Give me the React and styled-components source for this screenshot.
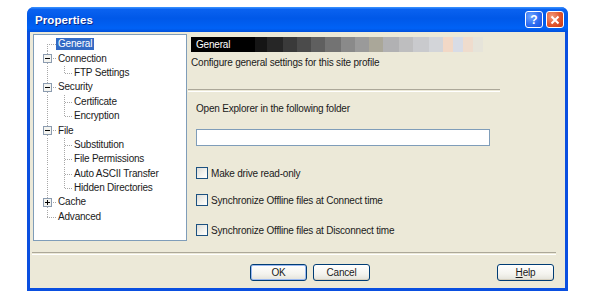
import React from 'react';
import styled, { createGlobalStyle } from 'styled-components';

const GlobalStyle = createGlobalStyle`
  html, body { margin: 0; padding: 0; background: #ffffff; }
  body { font-family: "Liberation Sans", Arial, sans-serif; }
`;

const Page = styled.div`
  padding: 7px 0 0 27px;
`;

const Window = styled.div`
  width: 541px;
  height: 284px;
  display: flex;
  flex-direction: column;
  background: #0a4fe0;
  border-radius: 7px 7px 0 0;
  box-sizing: border-box;
`;

const TitleBar = styled.div`
  height: 25px;
  flex: none;
  display: flex;
  align-items: center;
  padding: 0 4px 0 8px;
  border-radius: 7px 7px 0 0;
  background: linear-gradient(to bottom, #3d95ff 0%, #0a62f0 10%, #0058e8 45%, #0062f6 85%, #0050dc 100%);
`;

const TitleText = styled.div`
  flex: 1;
  color: #ffffff;
  font-weight: bold;
  font-size: 11.5px;
  text-shadow: 1px 1px 0 #0a2a8a;
  letter-spacing: 0.1px;
`;

const CaptionButton = styled.div`
  width: 18px;
  height: 17px;
  margin-left: 3px;
  box-sizing: border-box;
  border: 1px solid #ffffff;
  border-radius: 3px;
  display: flex;
  align-items: center;
  justify-content: center;
  color: #ffffff;
  font-weight: bold;
  font-size: 12px;
  background: ${p => (p.$close
    ? 'radial-gradient(circle at 30% 30%, #f29a7a 0%, #e0552e 55%, #c53a14 100%)'
    : 'radial-gradient(circle at 30% 30%, #6fa6ff 0%, #2d6cf2 55%, #1a4fd8 100%)')};
`;

const Client = styled.div`
  flex: 1;
  margin: 0 3px 3px 3px;
  background: #ece9d8;
  display: flex;
  flex-direction: column;
  font-size: 10px;
  letter-spacing: -0.2px;
  color: #1a1a1a;
`;

const MainRow = styled.div`
  display: flex;
  padding: 2px 0 0 3px;
`;

const Tree = styled.div`
  width: 154px;
  height: 207px;
  box-sizing: border-box;
  background: #ffffff;
  border: 1px solid #7f9db9;
  padding: 2px 0 0 4px;
`;

const TreeRow = styled.div`
  display: flex;
  align-items: center;
  height: 14.4px;
`;

const Label = styled.span`
  padding: 0 2px;
  line-height: 12px;
  height: 12px;
  white-space: nowrap;
  background: ${p => (p.$selected ? '#316ac5' : 'transparent')};
  color: ${p => (p.$selected ? '#ffffff' : '#1a1a1a')};
`;

const Panel = styled.div`
  flex: 1;
  padding: 3px 65px 0 4px;
  display: flex;
  flex-direction: column;
`;

const Header = styled.div`
  height: 15px;
  line-height: 15px;
  padding-left: 5px;
  color: #ffffff;
  background: linear-gradient(to right,
    #000000 0 64px, #151515 64px 76px, #262626 76px 92px, #3a3a3a 92px 106px,
    #4b4b4b 106px 120px, #5f5f5f 120px 134px, #737373 134px 150px, #8a8a8a 150px 164px,
    #9a9a9a 164px 178px, #aaa799 178px 192px, #b1b1b3 192px 208px, #bebebf 208px 222px,
    #c9cacd 222px 238px, #d3d5d9 238px 252px, #f2d8c6 252px 262px, #d8dce6 262px 272px,
    #efdccd 272px 282px, #e6e4da 282px 292px, transparent 292px);
`;

const Description = styled.div`
  margin-top: 4px;
  line-height: 14px;
`;

const Separator = styled.div`
  height: 1px;
  border-top: 1px solid #aca899;
  border-bottom: 1px solid #ffffff;
  margin: ${p => p.$margin};
`;

const Fields = styled.div`
  margin-left: 5px;
  display: flex;
  flex-direction: column;
`;

const FieldLabel = styled.div`
  margin-top: 10px;
  line-height: 14px;
`;

const TextInput = styled.div`
  margin-top: 13px;
  width: 294px;
  height: 17px;
  box-sizing: border-box;
  border: 1px solid #7f9db9;
  background: #ffffff;
`;

const CheckRow = styled.div`
  display: flex;
  align-items: center;
  gap: 3px;
  height: 14px;
  margin-top: ${p => p.$top}px;
`;

const CheckBox = styled.span`
  width: 12px;
  height: 12px;
  box-sizing: border-box;
  border: 1px solid #1c5180;
  background: linear-gradient(135deg, #dcdcd7 0%, #f4f4f0 60%, #ffffff 100%);
`;

const ButtonRow = styled.div`
  display: flex;
  margin-top: 9px;
  padding-left: 220px;
`;

const Button = styled.div`
  width: 57px;
  height: 17px;
  box-sizing: border-box;
  margin-left: ${p => p.$left || 0}px;
  border: 1px solid #003c74;
  border-radius: 3px;
  display: flex;
  align-items: center;
  justify-content: center;
  background: linear-gradient(to bottom, #ffffff 0%, #f4f3ee 60%, #e3e2da 100%);
  box-shadow: ${p => (p.$default ? 'inset 0 0 0 1px #9ab8f0' : 'inset 0 -1px 0 #d6d0c0')};
`;

const TREE = [
  { label: 'General', lines: ['first'], selected: true },
  { label: 'Connection', lines: ['tee'], box: '-' },
  { label: 'FTP Settings', lines: ['bar', 'ell'] },
  { label: 'Security', lines: ['tee'], box: '-' },
  { label: 'Certificate', lines: ['bar', 'tee'] },
  { label: 'Encryption', lines: ['bar', 'ell'] },
  { label: 'File', lines: ['tee'], box: '-' },
  { label: 'Substitution', lines: ['bar', 'tee'] },
  { label: 'File Permissions', lines: ['bar', 'tee'] },
  { label: 'Auto ASCII Transfer', lines: ['bar', 'tee'] },
  { label: 'Hidden Directories', lines: ['bar', 'ell'] },
  { label: 'Cache', lines: ['tee'], box: '+' },
  { label: 'Advanced', lines: ['ell'] },
];

const Connector = ({ kind, width, box }) => {
  const h = 14.4;
  const c = width === 18 ? 9 : 7.5;
  const m = h / 2;
  const dots = { stroke: '#a8a8a8', strokeWidth: 1, strokeDasharray: '1 1', shapeRendering: 'crispEdges' };
  return (
    <svg width={width} height={h} viewBox={`0 0 ${width} ${h}`} style={{ display: 'block', flex: 'none' }}>
      {kind === 'first' && <line x1={c + 0.5} y1={m} x2={c + 0.5} y2={h} {...dots} />}
      {(kind === 'tee' || kind === 'bar') && <line x1={c + 0.5} y1={0} x2={c + 0.5} y2={h} {...dots} />}
      {kind === 'ell' && <line x1={c + 0.5} y1={0} x2={c + 0.5} y2={m} {...dots} />}
      {kind !== 'bar' && <line x1={c} y1={Math.floor(m) + 0.5} x2={width} y2={Math.floor(m) + 0.5} {...dots} />}
      {box && (
        <g>
          <rect x={c - 4 + 0.5} y={Math.floor(m) - 4 + 0.5} width={8} height={8} fill="#f4f4f0" stroke="#8c9cb0" />
          <line x1={c - 2} y1={Math.floor(m) + 0.5} x2={c + 3} y2={Math.floor(m) + 0.5} stroke="#000" />
          {box === '+' && <line x1={c + 0.5} y1={Math.floor(m) - 2} x2={c + 0.5} y2={Math.floor(m) + 3} stroke="#000" />}
        </g>
      )}
    </svg>
  );
};

const App = () => (
  <Page>
    <GlobalStyle />
    <Window>
      <TitleBar>
        <TitleText>Properties</TitleText>
        <CaptionButton>?</CaptionButton>
        <CaptionButton $close>
          <svg width="10" height="10" viewBox="0 0 10 10">
            <path d="M1.5 1.5 L8.5 8.5 M8.5 1.5 L1.5 8.5" stroke="#ffffff" strokeWidth="2" />
          </svg>
        </CaptionButton>
      </TitleBar>
      <Client>
        <MainRow>
          <Tree>
            {TREE.map(item => (
              <TreeRow key={item.label}>
                {item.lines.map((kind, i) => (
                  <Connector key={i} kind={kind} width={i === 0 ? 18 : 16} box={i === item.lines.length - 1 ? item.box : null} />
                ))}
                <Label $selected={item.selected}>{item.label}</Label>
              </TreeRow>
            ))}
          </Tree>
          <Panel>
            <Header>General</Header>
            <Description>Configure general settings for this site profile</Description>
            <Separator $margin="19px 0 0 -3px" />
            <Fields>
              <FieldLabel>Open Explorer in the following folder</FieldLabel>
              <TextInput />
              <CheckRow $top={20}><CheckBox />Make drive read-only</CheckRow>
              <CheckRow $top={13}><CheckBox />Synchronize Offline files at Connect time</CheckRow>
              <CheckRow $top={16}><CheckBox />Synchronize Offline files at Disconnect time</CheckRow>
            </Fields>
          </Panel>
        </MainRow>
        <Separator $margin="11px 9px 0 2px" />
        <ButtonRow>
          <Button $default>OK</Button>
          <Button $left={6}>Cancel</Button>
          <Button $left={127}><span><u>H</u>elp</span></Button>
        </ButtonRow>
      </Client>
    </Window>
  </Page>
);

export default App;
